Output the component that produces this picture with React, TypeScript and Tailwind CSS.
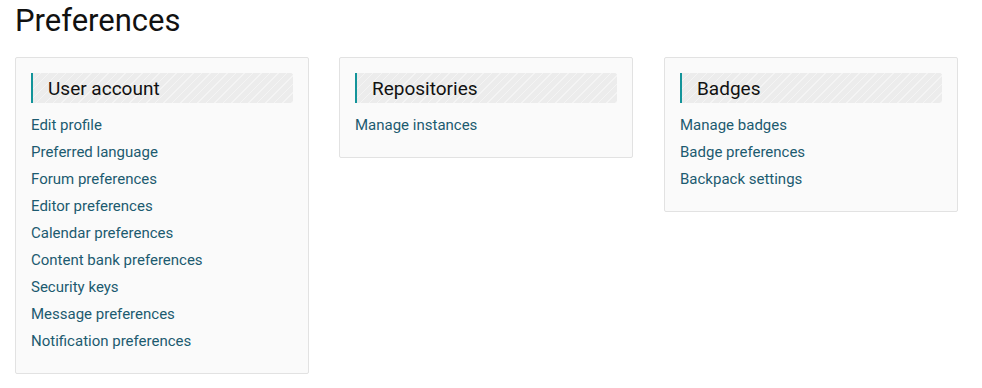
const sections = [
  {
    title: 'User account',
    links: [
      'Edit profile',
      'Preferred language',
      'Forum preferences',
      'Editor preferences',
      'Calendar preferences',
      'Content bank preferences',
      'Security keys',
      'Message preferences',
      'Notification preferences',
    ],
  },
  {
    title: 'Repositories',
    links: ['Manage instances'],
  },
  {
    title: 'Badges',
    links: ['Manage badges', 'Badge preferences', 'Backpack settings'],
  },
];

function PreferenceCard({ title, links }: { title: string; links: string[] }) {
  return (
    <div className="w-[294px] bg-[#fafafa] border border-[#e2e2e2] rounded-[2px] px-[15px] pt-[15px] pb-[18px]">
      <h3 className="h-[30px] flex items-center pt-[2px] border-l-2 border-[#13949a] rounded-r-[3px] pl-[15px] text-[19px] text-[#111] bg-[#eeeeee] bg-[repeating-linear-gradient(135deg,#ececec_0px,#ececec_5px,#f4f4f4_5px,#f4f4f4_6px)]">
        {title}
      </h3>
      <ul className="mt-[9px]">
        {links.map((link) => (
          <li key={link} className="text-[15px] leading-[27px]">
            <a href="#" className="text-[#1c5b70] hover:underline">
              {link}
            </a>
          </li>
        ))}
      </ul>
    </div>
  );
}

export default function App() {
  return (
    <div className="min-h-screen bg-white px-[15px] pt-[3px] font-['Roboto',sans-serif]">
      <h2 className="text-[31px] leading-[36px] text-[#111]">Preferences</h2>
      <div className="mt-[18px] flex items-start gap-[30px]">
        {sections.map((s, i) => (
          <div key={s.title} className={i === 2 ? 'ml-px' : ''}>
            <PreferenceCard title={s.title} links={s.links} />
          </div>
        ))}
      </div>
    </div>
  );
}
